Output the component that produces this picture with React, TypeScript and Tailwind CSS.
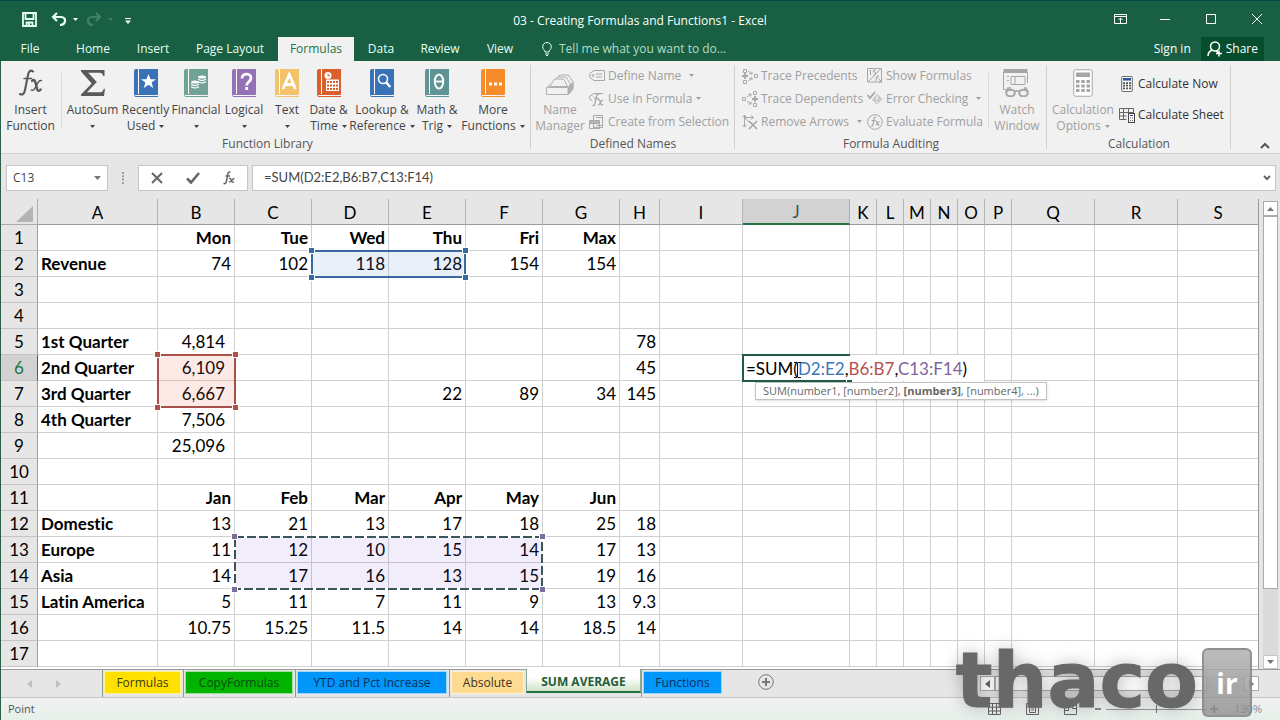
import { useState } from "react";
import type { ReactNode } from "react";
import clsx from "clsx";

const COLUMNS = [
  { name: "A", width: 120 },
  { name: "B", width: 77 },
  { name: "C", width: 77 },
  { name: "D", width: 77 },
  { name: "E", width: 77 },
  { name: "F", width: 77 },
  { name: "G", width: 77 },
  { name: "H", width: 40 },
  { name: "I", width: 83 },
  { name: "J", width: 107 },
  { name: "K", width: 27 },
  { name: "L", width: 27 },
  { name: "M", width: 27 },
  { name: "N", width: 27 },
  { name: "O", width: 27 },
  { name: "P", width: 27 },
  { name: "Q", width: 83 },
  { name: "R", width: 83 },
  { name: "S", width: undefined },
];

const ROWS: string[][] = [
  ["", "Mon", "Tue", "Wed", "Thu", "Fri", "Max"],
  ["Revenue", "74", "102", "118", "128", "154", "154"],
  [],
  [],
  ["1st Quarter", "4,814", "", "", "", "", "", "78"],
  ["2nd Quarter", "6,109", "", "", "", "", "", "45"],
  ["3rd Quarter", "6,667", "", "", "22", "89", "34", "145"],
  ["4th Quarter", "7,506"],
  ["", "25,096"],
  [],
  ["", "Jan", "Feb", "Mar", "Apr", "May", "Jun"],
  ["Domestic", "13", "21", "13", "17", "18", "25", "18"],
  ["Europe", "11", "12", "10", "15", "14", "17", "13"],
  ["Asia", "14", "17", "16", "13", "15", "19", "16"],
  ["Latin America", "5", "11", "7", "11", "9", "13", "9.3"],
  ["", "10.75", "15.25", "11.5", "14", "14", "18.5", "14"],
  [],
];

const RIBBON_TABS = [
  { label: "File", className: "w-[54px] mr-[5px]" },
  { label: "Home", className: "w-[62px]" },
  { label: "Insert", className: "w-[58px]" },
  { label: "Page Layout", className: "w-[96px]" },
  { label: "Formulas", className: "w-[76px]" },
  { label: "Data", className: "w-[54px]" },
  { label: "Review", className: "w-[64px]" },
  { label: "View", className: "w-[56px]" },
];

function Caret({ className }: { className?: string }) {
  return (
    <svg viewBox="0 0 5 3" className={clsx("h-[3px] w-[5px] shrink-0", className)} fill="currentColor">
      <path d="M0 0h5L2.500 3z" />
    </svg>
  );
}

/* ---------- ribbon icons ---------- */

function Book({ color, children }: { color: string; children: ReactNode }) {
  return (
    <svg viewBox="0 0 24 28" className="h-7 w-6">
      <path d="M2 0h22v25H2a2 2 0 0 0-2 1.500V2a2 2 0 0 1 2-2z" fill={color} />
      <path d="M4.500 0v25" stroke="#fff" strokeWidth="1" />
      <path d="M1 25.500h22.500v0H2q-1.500 0-1.500 1t1.500 1h22" fill="#fff" stroke={color} strokeWidth="1" />
      {children}
    </svg>
  );
}

function FxIcon({ className }: { className?: string }) {
  return (
    <svg viewBox="0 0 24 28" className={className} fill="none" stroke="currentColor" strokeLinecap="round">
      <path d="M14 2.500c-2.500-2-4.300 0-5 3.500L6 21c-.7 3.600-2.500 5.500-5 4" strokeWidth="2.100" />
      <path d="M5 9.500h7.500" strokeWidth="1.500" />
      <path d="M13 12c2-2 3-.5 3.600 2l1.500 6c.6 2.300 2 2.500 3.600.6" strokeWidth="2.400" />
      <path d="M22.500 11.700c-2-1-3.500 1.500-4.800 4.300S14.500 22.500 12.400 21" strokeWidth="1.500" />
    </svg>
  );
}

function SigmaIcon() {
  return (
    <svg viewBox="0 0 24 28" className="h-7 w-6" fill="#595959">
      <path d="M0 1h23.500v6h-1.300c-.5-2.500-1.400-3.300-4-3.300H7.200l8.600 9.300L6 23.300h12c3 0 4-.8 4.700-3.600H24L23 27H0v-1.500l10.700-11L0 2.600z" />
    </svg>
  );
}

function FinancialGlyph() {
  const coin = (x: number, y: number) => (
    <g key={`${x}-${y}`}>
      <ellipse cx={x} cy={y} rx="4" ry="1.600" />
      <path d={`M${x - 4} ${y + 1.6}q4 2.800 8 0v1.200q-4 2.800-8 0z`} />
      <path d={`M${x - 4} ${y + 4}q4 2.800 8 0v1.200q-4 2.800-8 0z`} />
    </g>
  );
  return (
    <g fill="#fff">
      {coin(11, 13)}
      {coin(18, 8)}
    </g>
  );
}

function DateGlyph() {
  return (
    <g>
      <circle cx="11" cy="6.500" r="3.500" fill="#fff" />
      <path d="M11 4.500v2.200h2" stroke="#d9602c" fill="none" />
      <path d="M9 10.500h13v11.500H9z" fill="#fff" />
      <path d="M10 13h11M10 16.500h11M10 20h11" stroke="#d9602c" strokeWidth="2" strokeDasharray="2 1" />
    </g>
  );
}

function DrawerIcon() {
  return (
    <svg viewBox="0 0 28 22" className="mt-1 h-[22px] w-7" fill="#f1f1f1" stroke="#b0b0b0" strokeWidth="1">
      <path d="M12 3.500q.5-2.500 3-2.500h6q2.500 0 3 2.500L27 7.500v6H10z" />
      <path d="M9.500 5.500q.5-2.500 3-2.500h6q2.500 0 3 2.500l2.500 4v4H7z" />
      <path d="M7 7.500q.5-2.500 3-2.500h6q2.500 0 3 2.500l2.500 5h-18z" />
      <path d="M1 13.500 4 10.500M22 13.500l4.500-5" />
      <path d="M.5 13.500H22v7H.5z" />
      <path d="M22.500 13.500 27 8.500v6.500l-4.500 5.500z" fill="#b0b0b0" />
    </svg>
  );
}

function WatchIcon() {
  return (
    <svg viewBox="0 0 28 28" className="h-7 w-7" fill="none" stroke="#a6a6a6">
      <path d="M.5 0h24v4H.5z" fill="#a6a6a6" stroke="none" />
      <path d="M.5 3v17.500h3M24.500 3v11M4 7.500h2m2 0h14v8M8 7.500v8h14M12 8v7M4 11.500h2" />
      <g strokeWidth="2">
        <ellipse cx="7.500" cy="24" rx="4.300" ry="3.300" />
        <ellipse cx="20.500" cy="24" rx="4.300" ry="3.300" />
        <path d="M11.500 22.500q2.500-1.500 5 0M3 23l2-4h3M25 23l-2-4h-2" strokeWidth="1.500" />
      </g>
    </svg>
  );
}

function CalculatorIcon({ small }: { small?: boolean }) {
  return (
    <svg
      viewBox="0 0 20 28"
      className={clsx("shrink-0", small ? "h-4 w-3" : "h-7 w-5")}
      fill="none"
      stroke={small ? "#555" : "#a6a6a6"}
    >
      <rect x=".75" y=".75" width="18.500" height="26.500" rx="2" strokeWidth={small ? 1.6 : 1} fill="#fff" />
      <path d="M3 3.500h14v4.500H3z" fill={small ? "#2b579a" : "#a6a6a6"} stroke="none" />
      <path d="M3 12.500h14M3 17h14M3 21.500h14" strokeWidth="3" strokeDasharray="3.500 1.750" />
    </svg>
  );
}

function SheetCalcIcon() {
  return (
    <svg viewBox="0 0 16 16" className="h-4 w-4 shrink-0" fill="none" stroke="#666">
      <path d="M.5 1.500h14v5M.5 1.500v11h7M.5 5.500h14M.5 9h7M4.500 1.500v11M9.500 1.500v5" />
      <rect x="9.500" y="6.500" width="6" height="9" fill="#fff" stroke="#444" />
      <path d="M11 8.500h3" stroke="#2b579a" />
      <path d="M11 11h3M11 13.500h3" strokeDasharray="1 1" />
    </svg>
  );
}

const SMALL_ICONS: Record<string, ReactNode> = {
  define: (
    <>
      <path d="M5 2.500h10.500v10H5L.8 9.500v-4z" />
      <circle cx="4" cy="7.500" r="1" />
      <path d="M7 6h6M7 9h6" />
    </>
  ),
  use: (
    <>
      <path d="M14 2.500H5L.8 5v3l2.700 2M4 6h1" />
      <path d="M10 3.500c-2-1-2.500 1-3 4l-1 5c-.5 2-1.500 2.500-2.500 2M5.500 7.500h4M9 9c2-1 2 1 2.500 3s1.500 2.500 2.500 1M14 9c-2 0-3 5-5 5" strokeWidth="1.300" />
    </>
  ),
  create: (
    <>
      <path d="M4.500 1.500h9v12h-9zM.5 6.500h10v8H.500zM.5 9.500h10M4.500 9.500v5M7 3.500h6M7 11.500h6" />
      <path d="M1 7h9v2H1z" fill="#c4c4c4" />
    </>
  ),
  precedents: (
    <>
      <path d="M1.500 1.500h3v3h-3zM1.500 12.500h3v3h-3zM12.500 6.500h3v3h-3z" />
      <path d="M0 8h6M3 5v6" strokeWidth="1.800" />
      <path d="M6 3l4 3M10 3.500V6H7.500M6 13l4-3M7.500 10H10v2.500" />
    </>
  ),
  dependents: (
    <>
      <path d="M.5 6.500h3v3h-3zM11.500.5h3v3h-3zM11.500 12.500h3v3h-3z" />
      <path d="M10 8h6M13 5v6" strokeWidth="1.800" />
      <path d="M5 6l4-3M6.500 3H9v2.500M5 10l4 3M9 10.500V13H6.500" />
    </>
  ),
  remove: (
    <>
      <path d="M2.500 1v12M.5 3.500 2.500 1l2 2.500M.5 11l2 2 2-2M2.500 3.500h9M9 1.500l2.500 2L9 5.500M3 4l5 5" />
      <path d="M7 7l8 8M15 7l-8 8" strokeWidth="1.700" />
    </>
  ),
  show: (
    <>
      <path d="M.5.5h14v13.500H.500zM14 .5 1 14" />
      <path d="M3.500 2v5M2.500 3l1-1M9 2H6.500v2q2.500-.5 2.500 1.200T6.500 7M12 8q-2-1-2.500 1.500L9 13M8.500 10h3M12 11l3 4M15 11l-3 4" />
    </>
  ),
  error: (
    <>
      <path d="M10 2.500l5.500 5.500-5.500 5.500L5 9z" fill="#c8c8c8" stroke="none" />
      <path d="M10 4.500v4.500M10 10.500v1.500" stroke="#f1f1f1" strokeWidth="1.500" />
      <path d="M.5 4l2.500 3L8 1" strokeWidth="1.800" />
    </>
  ),
  evaluate: (
    <>
      <circle cx="8" cy="8" r="7.300" />
      <path d="M9 3.500c-1.500-.8-2 .5-2.300 2.500L6 10.500c-.3 1.600-1 2-2 1.500M4.500 6.500h4M8.500 7.500c1.700-.8 1.500 1 2 2.500s1.300 1.500 2 .5M12.500 7.500c-1.500 0-2.500 3.500-4 3.500" strokeWidth="1.200" />
    </>
  ),
};

/* ---------- ribbon building blocks ---------- */

interface BigButtonProps {
  icon: ReactNode;
  lines: [string, string?];
  className: string;
  menu?: boolean;
  disabled?: boolean;
}

function BigButton({ icon, lines, className, menu, disabled }: BigButtonProps) {
  return (
    <button
      type="button"
      disabled={disabled}
      className={clsx(
        "flex shrink-0 flex-col items-center whitespace-nowrap pt-2",
        disabled ? "text-[#a0a0a0]" : "text-[#444]",
        className
      )}
    >
      <span className="flex h-7 items-center justify-center">{icon}</span>
      <span className="mt-[5px] leading-4">{lines[0]}</span>
      <span className="flex h-4 items-center gap-1 leading-4">
        {lines[1]}
        {menu && <Caret />}
      </span>
    </button>
  );
}

function SmallButton({ icon, label, menu, wide }: { icon: string; label: string; menu?: boolean; wide?: boolean }) {
  return (
    <button type="button" disabled className="flex h-[23px] items-center whitespace-nowrap text-[#a0a0a0]">
      <svg viewBox="0 0 16 16" className="mr-[3px] h-4 w-4 shrink-0" fill="none" stroke="#a8a8a8">
        {SMALL_ICONS[icon]}
      </svg>
      {label}
      {menu && <Caret className={wide ? "ml-2" : "ml-1"} />}
    </button>
  );
}

function Group({ label, className, children }: { label: string; className?: string; children: ReactNode }) {
  return (
    <section
      aria-label={label}
      className={clsx(
        "relative flex shrink-0 flex-col after:absolute after:top-1 after:right-0 after:bottom-1 after:w-px after:bg-[#d0d0d0]",
        className
      )}
    >
      <div className="flex h-[75px]">{children}</div>
      <p className="text-center leading-[18px] text-[#555]">{label}</p>
    </section>
  );
}

function Ribbon() {
  return (
    <div className="flex h-[93px] shrink-0 overflow-hidden border-b border-[#d2d2d2] bg-[#f1f1f1] pl-[3px] text-xs">
      <Group label="Function Library" className="w-[527px]">
        <BigButton icon={<FxIcon className="h-7 w-6 text-[#595959]" />} lines={["Insert", "Function"]} className="w-[53px]" />
        <span className="mx-1 mt-3 h-14 w-px shrink-0 bg-[#dcdcdc]" />
        <BigButton icon={<SigmaIcon />} lines={["AutoSum"]} menu className="w-[53px]" />
        <BigButton
          icon={
            <Book color="#3a72b8">
              <path d="m14.500 5 2 5.200 5.500.1-4.400 3.300 1.600 5.400-4.700-3.200L9.800 19l1.600-5.400L7 10.300l5.500-.1z" fill="#fff" />
            </Book>
          }
          lines={["Recently", "Used"]}
          menu
          className="w-[53px]"
        />
        <BigButton icon={<Book color="#71a296"><FinancialGlyph /></Book>} lines={["Financial"]} menu className="w-12" />
        <BigButton
          icon={
            <Book color="#9571b5">
              <path d="M10 9.500c0-6 9-5.500 9-.5 0 4-4.300 3.500-4.300 7.500M14.700 18v3" stroke="#fff" strokeWidth="2.800" fill="none" />
            </Book>
          }
          lines={["Logical"]}
          menu
          className="w-12"
        />
        <BigButton
          icon={
            <Book color="#f3c36b">
              <path d="M8 20 14.300 5.500 20.500 20M10.500 15.500h8" stroke="#fff" strokeWidth="2.800" fill="none" />
            </Book>
          }
          lines={["Text"]}
          menu
          className="w-[38px]"
        />
        <BigButton icon={<Book color="#d9602c"><DateGlyph /></Book>} lines={["Date &", "Time"]} menu className="w-[45px]" />
        <BigButton
          icon={
            <Book color="#3a72b8">
              <g fill="none" stroke="#fff">
                <circle cx="13" cy="10" r="4.500" strokeWidth="1.600" />
                <path d="m16.300 13.500 4 4.500" strokeWidth="2.600" />
              </g>
            </Book>
          }
          lines={["Lookup &", "Reference"]}
          menu
          className="w-[62px]"
        />
        <BigButton
          icon={
            <Book color="#5f9494">
              <ellipse cx="14" cy="12.500" rx="4.200" ry="7" fill="none" stroke="#fff" strokeWidth="2" />
              <path d="M10 12.500h8" stroke="#fff" strokeWidth="1.800" />
            </Book>
          }
          lines={["Math &", "Trig"]}
          menu
          className="w-12"
        />
        <BigButton
          icon={
            <Book color="#f58b2b">
              <path d="M8 13.500h3v3H8zM13 13.500h3v3h-3zM18 13.500h3v3h-3z" fill="#fff" />
            </Book>
          }
          lines={["More", "Functions"]}
          menu
          className="w-16"
        />
      </Group>

      <Group label="Defined Names" className="w-[204px]">
        <BigButton icon={<DrawerIcon />} lines={["Name", "Manager"]} disabled className="w-[58px]" />
        <div className="flex flex-col pt-[3px]">
          <SmallButton icon="define" label="Define Name" menu wide />
          <SmallButton icon="use" label="Use in Formula" menu />
          <SmallButton icon="create" label="Create from Selection" />
        </div>
      </Group>

      <Group label="Formula Auditing" className="w-[312px]">
        <div className="flex w-[125px] flex-col pt-[3px] pl-[7px]">
          <SmallButton icon="precedents" label="Trace Precedents" />
          <SmallButton icon="dependents" label="Trace Dependents" />
          <SmallButton icon="remove" label="Remove Arrows" menu wide />
        </div>
        <div className="flex w-[128px] flex-col pt-[3px] pl-[7px]">
          <SmallButton icon="show" label="Show Formulas" />
          <SmallButton icon="error" label="Error Checking" menu wide />
          <SmallButton icon="evaluate" label="Evaluate Formula" />
        </div>
        <span className="mt-3 h-14 w-px shrink-0 bg-[#dcdcdc]" />
        <BigButton icon={<WatchIcon />} lines={["Watch", "Window"]} disabled className="w-14" />
      </Group>

      <Group label="Calculation" className="w-[184px]">
        <BigButton icon={<CalculatorIcon />} lines={["Calculation", "Options"]} menu disabled className="w-[72px]" />
        <div className="flex flex-col pt-[7px] text-[#333]">
          <button type="button" className="flex h-[31px] items-center gap-[5px] pl-[2px] whitespace-nowrap">
            <CalculatorIcon small />
            Calculate Now
          </button>
          <button type="button" className="flex h-[31px] items-center gap-[3px] whitespace-nowrap">
            <SheetCalcIcon />
            Calculate Sheet
          </button>
        </div>
      </Group>

      <button type="button" aria-label="Collapse the ribbon" className="ml-auto self-end px-2.5 pb-1 text-[#555]">
        <svg viewBox="0 0 10 7" className="h-[7px] w-[10px]" fill="none" stroke="currentColor" strokeWidth="2">
          <path d="m1 6 4-4 4 4" />
        </svg>
      </button>
    </div>
  );
}

function TitleBar() {
  return (
    <header className="grid h-[37px] shrink-0 grid-cols-[1fr_auto_1fr] items-center border-t border-[#06494f] text-xs text-white">
      <div className="flex items-center pl-[22px]">
        <button type="button" aria-label="Save">
          <svg viewBox="0 0 15 15" className="h-[15px] w-[15px]" fill="none" stroke="#e6fff2" strokeWidth="1.800">
            <path d="M1 1h13v13H1zM3.500 1v6h8V1M4.500 14v-3.500h6V14M7 11.500V14" />
          </svg>
        </button>
        <button type="button" aria-label="Undo" className="ml-[14px] flex items-center gap-1.5">
          <svg viewBox="0 0 16 14" className="h-[14px] w-4" fill="none" stroke="#e6fff2" strokeWidth="2.200">
            <path d="M6 1 2 5l4 4M2.500 5H10c6 0 5 8-1 8" />
          </svg>
          <Caret />
        </button>
        <button type="button" aria-label="Redo" disabled className="ml-2 flex items-center gap-1.5 text-[#3f8262]">
          <svg viewBox="0 0 16 14" className="h-[14px] w-4" fill="none" stroke="currentColor" strokeWidth="2.200">
            <path d="m10 1 4 4-4 4M13.500 5H6c-6 0-5 8 1 8" />
          </svg>
          <Caret />
        </button>
        <button type="button" aria-label="Customize toolbar" className="ml-3 pt-1">
          <svg viewBox="0 0 6 6" className="h-1.5 w-1.5" fill="#fff">
            <path d="M0 0h6v1H0zM0 2.500h6L3 6z" />
          </svg>
        </button>
      </div>
      <h1 className="pt-1">03 - Creating Formulas and Functions1 - Excel</h1>
      <div className="flex items-center justify-end gap-[33px] pr-[18px]">
        <button type="button" aria-label="Ribbon display options">
          <svg viewBox="0 0 13 10" className="h-[10px] w-[13px]" fill="none" stroke="#fff">
            <path d="M.5.5h12v9H.5zM.5 2.500h12M6.500 9V4M4.500 6l2-2 2 2" />
          </svg>
        </button>
        <button type="button" aria-label="Minimize">
          <svg viewBox="0 0 10 10" className="h-[10px] w-[10px]" stroke="#fff">
            <path d="M0 5.500h10" />
          </svg>
        </button>
        <button type="button" aria-label="Maximize" className="ml-[3px]">
          <svg viewBox="0 0 10 10" className="h-[10px] w-[10px]" stroke="#fff" fill="none">
            <path d="M.5.5h9v9h-9z" />
          </svg>
        </button>
        <button type="button" aria-label="Close" className="ml-[3px]">
          <svg viewBox="0 0 10 10" className="h-[10px] w-[10px]" stroke="#fff">
            <path d="m0 0 10 10M10 0 0 10" />
          </svg>
        </button>
      </div>
    </header>
  );
}

function TabRow() {
  const [active, setActive] = useState("Formulas");
  return (
    <nav className="flex h-6 shrink-0 items-stretch pl-[3px] text-xs text-[#e6fff2]">
      {RIBBON_TABS.map((tab) => (
        <button
          key={tab.label}
          type="button"
          onClick={() => setActive(tab.label)}
          className={clsx(
            "shrink-0 whitespace-nowrap",
            tab.className,
            active === tab.label && "bg-[#f1f1f1] text-[#217346]"
          )}
        >
          {tab.label}
        </button>
      ))}
      <label className="ml-[14px] flex items-center gap-[7px]">
        <svg viewBox="0 0 10 14" className="h-[14px] w-[10px] shrink-0" fill="none" stroke="currentColor">
          <path d="M3 10C3 8 .7 7.500.7 4.800a4.300 4.300 0 0 1 8.600 0C9.300 7.500 7 8 7 10zM3 12h4M4 13.500h2" />
        </svg>
        <input
          type="text"
          aria-label="Tell me"
          placeholder="Tell me what you want to do..."
          className="w-48 bg-transparent outline-none placeholder:text-[#b4dcc6]"
        />
      </label>
      <button type="button" className="ml-auto px-2.5 whitespace-nowrap text-white">
        Sign in
      </button>
      <button type="button" className="mr-4 flex items-center gap-[3px] bg-[#054d2d] px-1.5 text-white">
        <svg viewBox="0 0 16 16" className="h-4 w-4" fill="none" stroke="currentColor" strokeWidth="1.500">
          <circle cx="8" cy="5.500" r="4.500" />
          <path d="M1 15c0-3 2-5 4-6M9 9.500l2 2M9 12.500h6M12 9.500v6" />
        </svg>
        Share
      </button>
    </nav>
  );
}

function FormulaBar() {
  const [formula, setFormula] = useState("=SUM(D2:E2,B6:B7,C13:F14)");
  return (
    <div className="flex shrink-0 items-center pt-[11px] pr-1 pb-2 pl-[5px] text-xs text-[#444]">
      <div className="flex h-[26px] w-[102px] items-center border border-[#c6c6c6] bg-white">
        <input aria-label="Name box" defaultValue="C13" className="w-20 bg-transparent pl-1.5 outline-none" />
        <button type="button" aria-label="Names" className="ml-auto pr-1.5 text-[#777]">
          <svg viewBox="0 0 7 4" className="h-1 w-[7px]" fill="currentColor">
            <path d="M0 0h7L3.500 4z" />
          </svg>
        </button>
      </div>
      <svg viewBox="0 0 2 12" className="mr-[14px] ml-[14px] h-3 w-0.5" fill="#a0a0a0">
        <path d="M0 0h2v2H0zM0 3.300h2v2H0zM0 6.600h2v2H0zM0 10h2v2H0z" />
      </svg>
      <div className="flex h-[26px] w-[110px] items-center justify-between border border-[#c6c6c6] bg-white px-3 text-[#666]">
        <button type="button" aria-label="Cancel">
          <svg viewBox="0 0 12 12" className="h-3 w-3" stroke="currentColor" strokeWidth="2">
            <path d="m1 1 10 10M11 1 1 11" />
          </svg>
        </button>
        <button type="button" aria-label="Enter">
          <svg viewBox="0 0 14 12" className="h-3 w-[14px]" fill="none" stroke="currentColor" strokeWidth="2.600">
            <path d="m1 6.500 4 4L13 1" />
          </svg>
        </button>
        <button type="button" aria-label="Insert function">
          <svg viewBox="0 0 12 14" className="h-[14px] w-3" fill="none" stroke="currentColor" strokeWidth="1.500">
            <path d="M7.500 1.200C5.800.5 5 1.500 4.700 3.500L3.500 10c-.4 2-1.200 3-3 2.500M2.500 5h4.500" />
            <path d="M6 7.500c1.500-.8 1.800.3 2.200 1.700S9.500 12 11 10.800M11.500 7.500c-2-.3-3.300 4-5.500 3.700" strokeWidth="1.300" />
          </svg>
        </button>
      </div>
      <div className="ml-1 flex h-[26px] min-w-0 flex-1 items-center border border-[#c6c6c6] bg-white">
        <input
          aria-label="Formula bar"
          value={formula}
          onChange={(e) => setFormula(e.target.value)}
          className="min-w-0 flex-1 bg-transparent pl-[11px] font-['Lato',sans-serif] text-[13px] outline-none"
        />
        <button type="button" aria-label="Expand formula bar" className="pr-1 text-[#666]">
          <svg viewBox="0 0 8 6" className="h-1.5 w-2" fill="none" stroke="currentColor" strokeWidth="2">
            <path d="m1 1 3 3 3-3" />
          </svg>
        </button>
      </div>
    </div>
  );
}

/* ---------- worksheet ---------- */

function Handles({ className }: { className: string }) {
  const base = "absolute h-[5px] w-[5px] outline outline-white";
  return (
    <>
      <i className={clsx(base, "-top-[2px] -left-[2px]", className)} />
      <i className={clsx(base, "-top-[2px] -right-[2px]", className)} />
      <i className={clsx(base, "-bottom-[2px] -left-[2px]", className)} />
      <i className={clsx(base, "-right-[2px] -bottom-[2px]", className)} />
    </>
  );
}

function CellOverlay({ cell }: { cell: string }) {
  switch (cell) {
    case "D2":
      return (
        <span className="pointer-events-none absolute -top-px -left-px z-10 h-7 w-[155px]">
          <span className="absolute inset-0 border-2 border-[#3a68a0] bg-[#4c80d8]/12" />
          <Handles className="bg-[#3a68a0]" />
        </span>
      );
    case "B6":
      return (
        <span className="pointer-events-none absolute -top-px -left-px z-10 h-[54px] w-[79px]">
          <span className="absolute inset-0 border-2 border-[#a8504a] bg-[#f05a46]/13" />
          <Handles className="bg-[#b0504a]" />
        </span>
      );
    case "C13":
      return (
        <span className="pointer-events-none absolute -top-px -left-px z-10 h-[54px] w-[309px] bg-[#7850d0]/10">
          <svg className="absolute inset-0 h-full w-full" fill="none" strokeWidth="2">
            <rect x="1" y="1" width="307" height="52" stroke="#fff" />
            <rect x="1" y="1" width="307" height="52" stroke="#3c5558" strokeDasharray="9 3" />
          </svg>
          <Handles className="bg-[#7d6b9e]" />
        </span>
      );
    case "J6":
      return (
        <span className="absolute -top-px -left-px z-20 flex h-7 w-[242px] items-center text-left whitespace-nowrap">
          <span className="absolute inset-x-0 inset-y-px bg-white" />
          <span className="absolute top-0 left-0 h-7 w-[108px] border-2 border-r-0 border-[#1f5c42]" />
          <i className="absolute top-[26px] left-[105px] h-1 w-[5px] bg-[#1f5c42] outline outline-white" />
          <span className="relative pl-1">
            =SUM(<span className="text-[#3f74b5]">D2:E2</span>,<span className="text-[#b5514c]">B6:B7</span>,
            <span className="text-[#8064a2]">C13:F14</span>)
          </span>
          <svg viewBox="0 0 7 16" className="absolute top-2 left-[52px] h-4 w-[7px]" fill="none" stroke="#111">
            <path d="M0 .5h3l.5 1 .5-1h3M3.500 1v14M0 15.500h3l.5-1 .5 1h3" />
          </svg>
          <span
            role="tooltip"
            className="absolute top-7 left-[13px] border border-[#c2c2c2] bg-white px-[7px] font-['Open_Sans',sans-serif] text-[11px] leading-4 text-[#666] shadow-sm"
          >
            SUM(number1, [number2], <b>[number3]</b>, [number4], ...)
          </span>
        </span>
      );
    default:
      return null;
  }
}

function Worksheet() {
  return (
    <div className="min-w-0 flex-1 overflow-hidden border-r border-[#9b9b9b] bg-white font-['Lato','Liberation_Sans',sans-serif] text-[17px] text-black [font-variant-ligatures:none]">
      <table className="w-full table-fixed border-separate border-spacing-0">
        <colgroup>
          <col style={{ width: 37 }} />
          {COLUMNS.map((col) => (
            <col key={col.name} style={{ width: col.width }} />
          ))}
        </colgroup>
        <thead>
          <tr className="h-[25px] bg-[#e6e6e6]">
            <th className="border-r border-b border-[#ababab] p-0">
              <svg viewBox="0 0 17 16" className="mt-1 mr-1 ml-auto h-4 w-[17px]" fill="#b4b4b4">
                <path d="M17 0v16H0z" />
              </svg>
            </th>
            {COLUMNS.map(({ name }) => (
              <th
                key={name}
                scope="col"
                className={clsx(
                  "border-r p-0 pt-0.5 font-normal leading-[22px] last:border-r-0",
                  name === "J"
                    ? "border-b-2 border-[#b0b0b0] border-b-[#217346] bg-[#d2d2d2] text-[#3e5c50]"
                    : "border-b border-[#b4b4b4] border-b-[#9b9b9b]"
                )}
              >
                {name}
              </th>
            ))}
          </tr>
        </thead>
        <tbody>
          {ROWS.map((row, r) => (
            <tr key={r} className="h-[26px]">
              <th
                scope="row"
                className={clsx(
                  "border-r border-b border-b-[#c4c4c4] p-0 font-normal leading-[25px]",
                  r === 5 ? "border-r-[#217346] bg-[#d2d2d2] text-[#217346]" : "border-r-[#9b9b9b] bg-[#e6e6e6]"
                )}
              >
                {r + 1}
              </th>
              {COLUMNS.map(({ name }, c) => (
                <td
                  key={name}
                  className={clsx(
                    "relative border-r border-b border-[#d0d0d0] p-0 px-[3px] leading-[25px] whitespace-nowrap last:border-r-0",
                    c === 0 ? "text-left" : "text-right",
                    (c === 0 || r === 0 || r === 10) && "font-bold",
                    c === 1 && r >= 4 && r <= 8 && "pr-[9px]"
                  )}
                >
                  {row[c]}
                  <CellOverlay cell={`${name}${r + 1}`} />
                </td>
              ))}
            </tr>
          ))}
        </tbody>
      </table>
    </div>
  );
}

function VerticalScroll() {
  return (
    <div className="flex w-[21px] shrink-0 flex-col bg-[#e6e6e6] pt-[2px] pr-[2px] pl-1">
      <button type="button" aria-label="Scroll up" className="flex h-[15px] items-center justify-center border border-[#ababab] bg-white text-[#777]">
        <svg viewBox="0 0 7 4" className="h-1 w-[7px]" fill="currentColor">
          <path d="M0 4h7L3.500 0z" />
        </svg>
      </button>
      <div className="flex-1 bg-[#dadada]">
        <div className="h-[85%] border border-[#ababab] bg-white" />
      </div>
      <button type="button" aria-label="Scroll down" className="flex h-[14px] items-center justify-center border border-[#c6c6c6] bg-white text-[#777]">
        <svg viewBox="0 0 7 4" className="h-1 w-[7px]" fill="currentColor">
          <path d="M0 0h7L3.500 4z" />
        </svg>
      </button>
    </div>
  );
}

const SHEETS = [
  { name: "Formulas", className: "w-[77px] bg-[#ffe100] text-[#3c3a10]" },
  { name: "CopyFormulas", className: "w-[108px] bg-[#00b400] text-[#0b4a12]" },
  { name: "YTD and Pct Increase", className: "w-[150px] bg-[#0096fa] text-[#0c2f5c]" },
  { name: "Absolute", className: "w-[73px] bg-[#ffdb91] text-[#3c3423]" },
  { name: "SUM AVERAGE", className: "" },
  { name: "Functions", className: "w-[79px] bg-[#0096fa] text-[#0c2f5c]" },
];

function SheetTabs() {
  return (
    <div className="flex h-7 shrink-0 border-t border-[#9b9b9b] bg-[#e6e6e6] pl-[26px] text-xs">
      <div className="flex w-[75px] items-center gap-6 text-[#c0c0c0]">
        <button type="button" aria-label="Previous sheet" disabled>
          <svg viewBox="0 0 5 8" className="h-2 w-[5px]" fill="currentColor">
            <path d="M5 0v8L0 4z" />
          </svg>
        </button>
        <button type="button" aria-label="Next sheet" disabled>
          <svg viewBox="0 0 5 8" className="h-2 w-[5px]" fill="currentColor">
            <path d="M0 0v8l5-4z" />
          </svg>
        </button>
      </div>
      {SHEETS.map((sheet) =>
        sheet.name === "SUM AVERAGE" ? (
          <button
            key={sheet.name}
            type="button"
            className="-mt-px mb-1 w-[115px] shrink-0 border-x border-b-2 border-[#8fa898] border-b-[#217346] bg-linear-to-b from-white from-40% to-[#cfe3c8] pt-1 font-bold whitespace-nowrap text-[#245c3c]"
          >
            {sheet.name}
          </button>
        ) : (
          <div key={sheet.name} className="flex shrink-0 border-l border-[#8a9a94] pt-px pb-[3px] pl-px last-of-type:border-r">
            <button type="button" className={clsx("mr-[2px] border border-white/60 whitespace-nowrap", sheet.className)}>
              {sheet.name}
            </button>
          </div>
        )
      )}
      <button type="button" aria-label="New sheet" className="mb-1 ml-[34px] shrink-0">
        <svg viewBox="0 0 16 16" className="h-4 w-4" fill="none" stroke="#777">
          <circle cx="8" cy="8" r="7.300" />
          <path d="M8 4v8M4 8h8" strokeWidth="2" />
        </svg>
      </button>
      <div className="mt-1.5 mr-[21px] ml-auto flex h-[15px] w-[279px] shrink-0 items-stretch text-[#666]">
        <button type="button" aria-label="Scroll left" className="flex w-[15px] items-center justify-center border border-[#ababab] bg-white">
          <svg viewBox="0 0 5 8" className="h-2 w-[5px]" fill="currentColor">
            <path d="M5 0v8L0 4z" />
          </svg>
        </button>
        <div className="flex-1 bg-[#d4d4d4]">
          <div className="h-full w-[85%] border border-[#ababab] bg-white" />
        </div>
        <button type="button" aria-label="Scroll right" className="flex w-[15px] items-center justify-center border border-[#ababab] bg-white">
          <svg viewBox="0 0 5 8" className="h-2 w-[5px]" fill="currentColor">
            <path d="M0 0v8l5-4z" />
          </svg>
        </button>
      </div>
    </div>
  );
}

const VIEW_MODES = [
  { label: "Normal", d: "M.5.5h12v11H.5zM.5 4.200h12M.5 8h12M4.500.5v11M8.500.5v11" },
  { label: "Page layout", d: "M.5.5h12v11H.5zM3.500 3v6.500h6V3zM5 5h3M5 7h3" },
  { label: "Page break preview", d: "M.5.5h12v11H.5zM.5 7.500h4v-7M8.500.5v5h4" },
];

function StatusBar() {
  return (
    <footer className="flex h-[23px] shrink-0 items-center border-t border-[#c6c6c6] bg-linear-to-b from-[#f1f1f1] to-[#e6f0ea] pr-[18px] pl-[7px] text-[11px] text-[#555]">
      <span>Point</span>
      <div className="ml-auto flex items-center gap-[25px]">
        {VIEW_MODES.map((mode) => (
          <button key={mode.label} type="button" aria-label={mode.label}>
            <svg viewBox="0 0 13 12" className="h-3 w-[13px]" fill="none" stroke="#666">
              <path d={mode.d} />
            </svg>
          </button>
        ))}
      </div>
      <div className="ml-[17px] flex items-center text-[#8a8a8a]">
        <button type="button" aria-label="Zoom out">
          <svg viewBox="0 0 8 8" className="h-2 w-2" stroke="currentColor" strokeWidth="2">
            <path d="M1 4h6" />
          </svg>
        </button>
        <input
          type="range"
          aria-label="Zoom"
          min={10}
          max={250}
          defaultValue={130}
          className="mx-1 h-px w-[100px] appearance-none bg-[#999] [&::-webkit-slider-thumb]:h-2 [&::-webkit-slider-thumb]:w-px [&::-webkit-slider-thumb]:appearance-none [&::-webkit-slider-thumb]:bg-[#777]"
        />
        <button type="button" aria-label="Zoom in">
          <svg viewBox="0 0 8 8" className="h-2 w-2" stroke="currentColor" strokeWidth="2">
            <path d="M0 4h8M4 0v8" />
          </svg>
        </button>
        <span className="ml-4">130%</span>
      </div>
    </footer>
  );
}

function Watermark() {
  return (
    <div className="pointer-events-none absolute right-7 bottom-[3px] z-30 flex items-end gap-1">
      <span className="mb-1 font-['DejaVu_Sans',sans-serif] text-[77px] leading-[64px] font-bold text-[#686868] drop-shadow-[0_0_8px_rgba(0,0,0,0.25)] [-webkit-text-stroke:1px_#686868]">
        thaco
      </span>
      <span className="flex h-[69px] w-[50px] items-center justify-center rounded-md border-2 border-[#8a8a8a]/80 bg-linear-to-b from-[#b4b4b4]/90 to-[#888]/75 font-['Open_Sans',sans-serif] text-[28px] font-bold text-white">
        ir
      </span>
    </div>
  );
}

export default function App() {
  return (
    <div className="relative flex h-screen flex-col overflow-hidden bg-[#185f43] font-['Open_Sans','Noto_Sans',sans-serif]">
      <TitleBar />
      <TabRow />
      <main className="flex min-h-0 flex-1 flex-col border-l border-[#2d5f48] bg-[#e6e6e6]">
        <Ribbon />
        <FormulaBar />
        <div className="flex min-h-0 flex-1">
          <Worksheet />
          <VerticalScroll />
        </div>
        <SheetTabs />
        <StatusBar />
      </main>
      <Watermark />
    </div>
  );
}
